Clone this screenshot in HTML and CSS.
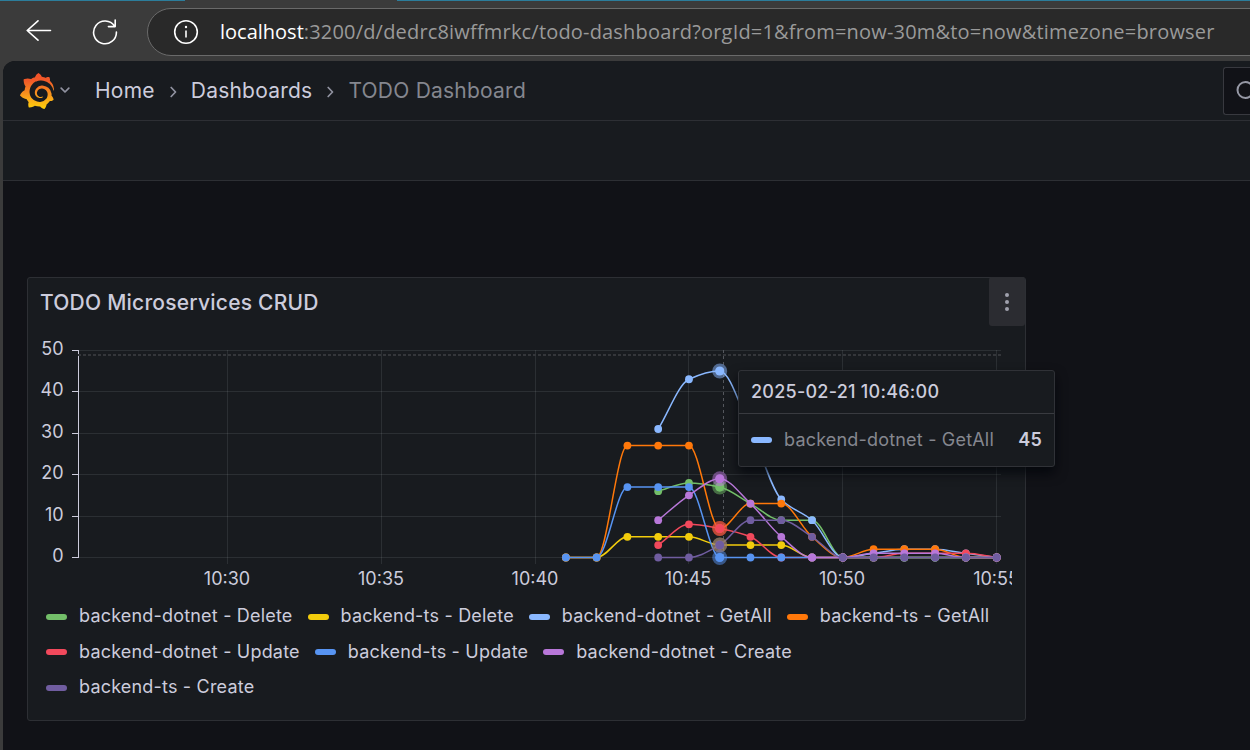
FILE: index.html
```html
<!DOCTYPE html>
<html lang="en">
<head>
<meta charset="utf-8">
<title>TODO Dashboard</title>
<link rel="stylesheet" href="styles.css">
</head>
<body>
<header class="browser">
  <svg class="nav-icon" width="26" height="22" viewBox="0 0 26 22"><path d="M24.5 10.5H1.2M12 .8 1.2 10.5 12 20.2"/></svg>
  <svg class="nav-icon reload" width="26" height="26" viewBox="0 0 26 26"><path d="M22.6 7.2A11.4 11.4 0 1 0 24.4 13M23.2 1v6.6h-6.8"/></svg>
  <div class="address">
    <svg class="info-icon" width="26" height="26" viewBox="0 0 26 26"><circle cx="13" cy="13" r="11.3"/><path d="M13 11.5v7"/><circle class="dot" cx="13" cy="8" r="1.2"/></svg>
    <span class="url"><b>localhost</b>:3200/d/dedrc8iwffmrkc/todo-dashboard?orgId=1&amp;from=now-30m&amp;to=now&amp;timezone=browser</span>
  </div>
</header>
<main class="app">
  <nav class="topbar">
    <svg class="logo" width="34" height="36" viewBox="0.95 0 22.1 24" preserveAspectRatio="none">
      <defs><linearGradient id="flame" x1="0" y1="1" x2="0" y2="0"><stop offset="0" stop-color="#fdd00a"/><stop offset=".3" stop-color="#faa61a"/><stop offset=".78" stop-color="#f05a28"/><stop offset="1" stop-color="#f0512b"/></linearGradient></defs>
      <path fill="url(#flame)" d="M23.02 10.59a8.578 8.578 0 0 0-.862-3.034 8.911 8.911 0 0 0-1.789-2.445c.337-1.342-.413-2.505-.413-2.505-1.292-.08-2.113.4-2.416.62-.052-.02-.102-.044-.154-.064-.22-.089-.446-.172-.677-.247-.231-.073-.47-.14-.711-.197a9.867 9.867 0 0 0-.875-.161C14.557.753 12.94 0 12.94 0c-1.804 1.145-2.147 2.744-2.147 2.744l-.018.093c-.098.029-.2.057-.298.088-.138.042-.275.094-.413.143-.138.055-.275.107-.41.166a8.869 8.869 0 0 0-1.557.87l-.063-.029c-2.497-.955-4.716.195-4.716.195-.203 2.658.996 4.33 1.235 4.636a11.608 11.608 0 0 0-.607 2.635C1.636 12.677.953 15.014.953 15.014c1.926 2.214 4.171 2.351 4.171 2.351.003-.002.006-.002.006-.005.285.509.615.994.986 1.446.156.19.32.371.488.548-.704 2.009.099 3.68.099 3.68 2.144.08 3.553-.937 3.849-1.173a9.784 9.784 0 0 0 3.164.501h.08l.055-.003.107-.002.103-.005.003.002c1.01 1.44 2.788 1.646 2.788 1.646 1.264-1.332 1.337-2.653 1.337-2.94v-.058c0-.02-.003-.039-.003-.06.265-.187.52-.387.758-.6a7.875 7.875 0 0 0 1.415-1.7c1.43.083 2.437-.885 2.437-.885-.236-1.49-1.085-2.216-1.264-2.354l-.018-.013-.016-.013a.217.217 0 0 1-.031-.02c.008-.092.016-.18.02-.27.011-.162.016-.323.016-.48v-.253l-.005-.098-.008-.135a1.891 1.891 0 0 0-.01-.13c-.003-.042-.008-.083-.013-.125l-.016-.124-.018-.122a6.215 6.215 0 0 0-2.032-3.73 6.015 6.015 0 0 0-3.222-1.46 6.292 6.292 0 0 0-.85-.048l-.107.002h-.063l-.044.003-.104.008a4.777 4.777 0 0 0-3.335 1.695c-.332.4-.592.84-.768 1.297a4.594 4.594 0 0 0-.312 1.817l.003.091c.005.055.007.11.013.164a3.615 3.615 0 0 0 .698 1.82 3.53 3.53 0 0 0 1.827 1.282c.33.098.66.14.971.137.039 0 .078 0 .114-.002l.063-.003c.02 0 .041-.003.062-.003.034-.002.065-.007.099-.01.007 0 .018-.003.028-.003l.031-.005.06-.008a1.18 1.18 0 0 0 .112-.02c.036-.008.072-.013.109-.024a2.634 2.634 0 0 0 .914-.415c.028-.02.056-.041.085-.065a.248.248 0 0 0 .039-.35.244.244 0 0 0-.309-.06l-.078.042c-.09.044-.184.083-.283.116a2.476 2.476 0 0 1-.475.096c-.028.003-.054.006-.083.006l-.083.002c-.026 0-.054 0-.08-.002l-.102-.006h-.012l-.024.006c-.016-.003-.031-.003-.044-.006-.031-.002-.06-.007-.091-.01a2.59 2.59 0 0 1-.724-.213 2.557 2.557 0 0 1-.667-.438 2.52 2.52 0 0 1-.805-1.475 2.306 2.306 0 0 1-.029-.444l.006-.122v-.023l.002-.031c.003-.021.003-.04.005-.06a3.163 3.163 0 0 1 1.352-2.29 3.12 3.12 0 0 1 .937-.43 2.946 2.946 0 0 1 .776-.101h.06l.07.002.045.003h.026l.07.005a4.041 4.041 0 0 1 1.635.49 3.94 3.94 0 0 1 1.602 1.662 3.77 3.77 0 0 1 .397 1.414l.005.076.003.075c.002.026.002.05.002.075 0 .024.003.052 0 .07v.065l-.002.073-.008.174a6.195 6.195 0 0 1-.08.639 5.1 5.1 0 0 1-.267.927 5.31 5.31 0 0 1-.624 1.13 5.052 5.052 0 0 1-3.237 2.014 4.82 4.82 0 0 1-.649.066l-.039.003h-.287a6.607 6.607 0 0 1-1.716-.265 6.776 6.776 0 0 1-3.4-2.274 6.75 6.75 0 0 1-.746-1.15 6.616 6.616 0 0 1-.714-2.596l-.005-.083-.002-.02v-.056l-.003-.073v-.096l-.003-.104v-.07l.003-.163c.008-.22.026-.45.054-.678a8.707 8.707 0 0 1 .28-1.355c.128-.444.286-.872.473-1.277a7.04 7.04 0 0 1 1.456-2.1 5.925 5.925 0 0 1 .953-.763c.169-.111.343-.213.524-.306.089-.05.182-.091.273-.135.047-.02.093-.042.138-.062a7.177 7.177 0 0 1 .714-.267l.145-.045c.049-.015.098-.026.148-.041.098-.029.197-.052.296-.076.049-.013.1-.02.15-.033l.15-.032.151-.028.076-.013.075-.01.153-.024c.057-.01.114-.013.171-.023l.169-.021c.036-.003.073-.008.106-.01l.073-.008.036-.003.042-.002c.057-.003.114-.008.171-.01l.086-.006h.023l.037-.003.145-.007a7.999 7.999 0 0 1 1.708.125 7.917 7.917 0 0 1 2.048.68 8.253 8.253 0 0 1 1.672 1.09l.09.077.089.078c.06.052.114.107.171.159.057.052.112.106.166.16.052.055.107.107.159.164a8.671 8.671 0 0 1 1.41 1.978c.012.026.028.052.04.078l.04.078.075.156c.023.051.05.1.07.153l.065.15a8.848 8.848 0 0 1 .45 1.34.19.19 0 0 0 .201.142.186.186 0 0 0 .172-.184c.01-.246.002-.532-.024-.856z"/>
    </svg>
    <svg class="caret" width="10" height="7" viewBox="0 0 10 7"><path d="M1.2 1.2 5 5 8.8 1.2"/></svg>
    <span class="crumb home">Home</span>
    <svg class="sep" width="7" height="12" viewBox="0 0 7 12"><path d="M1.2 1.5 5.5 6 1.2 10.5"/></svg>
    <span class="crumb dashboards">Dashboards</span>
    <svg class="sep" width="7" height="12" viewBox="0 0 7 12"><path d="M1.2 1.5 5.5 6 1.2 10.5"/></svg>
    <span class="crumb current">TODO Dashboard</span>
    <div class="search"><svg width="24" height="24" viewBox="0 0 24 24"><circle cx="10.5" cy="10" r="8"/><path d="m16 16 6 6"/></svg></div>
  </nav>
  <div class="toolbar"></div>
  <section class="canvas">
    <article class="panel">
      <div class="panel-head">
        <h2>TODO Microservices CRUD</h2>
        <button class="menu" aria-label="Menu"><i></i><i></i><i></i></button>
      </div>
      <svg class="chart" id="chart" width="984" height="268" viewBox="28 327 984 268"></svg>
      <div class="legend">
        <div class="row"><span class="item"><i class="green"></i>backend-dotnet - Delete</span><span class="item"><i class="yellow"></i>backend-ts - Delete</span><span class="item"><i class="sky"></i>backend-dotnet - GetAll</span><span class="item"><i class="orange"></i>backend-ts - GetAll</span></div>
        <div class="row"><span class="item"><i class="red"></i>backend-dotnet - Update</span><span class="item"><i class="blue"></i>backend-ts - Update</span><span class="item"><i class="violet"></i>backend-dotnet - Create</span></div>
        <div class="row"><span class="item"><i class="purple"></i>backend-ts - Create</span></div>
      </div>
      <div class="tooltip">
        <div class="time">2025-02-21 10:46:00</div>
        <div class="value"><i class="sky"></i><span>backend-dotnet - GetAll</span><b>45</b></div>
      </div>
    </article>
  </section>
</main>
<script src="chart.js"></script>
</body>
</html>
```
FILE: styles.css
```css
* { box-sizing: border-box; }
body { margin: 0; width: 1250px; height: 750px; overflow: hidden; background: #3b3b3b; font-family: Inter, sans-serif; color: #ccccdc; }
svg { display: block; flex: none; }

.browser { height: 61px; display: flex; align-items: center; padding: 2px 0 0 26px; background: linear-gradient(90deg, #2c7d9b 185px, #3b3b3b 185px, #3b3b3b 397px, #2c7d9b 397px) top / 100% 1px no-repeat #3b3b3b; }
.nav-icon { fill: none; stroke: #fff; stroke-width: 1.6; stroke-linecap: round; stroke-linejoin: round; }
.nav-icon:first-child { margin-top: -2px; }
.reload { margin-left: 40px; }
.address { width: 1130px; height: 48px; flex: none; margin-left: 29px; padding-left: 25px; display: flex; align-items: center; border: 1px solid #6a6a6a; border-radius: 24px; background: #292929; }
.info-icon { fill: none; stroke: #fff; stroke-width: 1.6; }
.info-icon .dot { fill: #fff; stroke: none; }
.url { margin-left: 21px; font: 20px "Open Sans", sans-serif; letter-spacing: .182px; color: #9a9a9a; white-space: nowrap; }
.url b { font-weight: 400; color: #fff; letter-spacing: 0; }

.app { height: 689px; margin-left: 3px; background: #111217; border-top-left-radius: 12px; overflow: hidden; }
.topbar { height: 60px; display: flex; align-items: center; background: #181b1f; border-bottom: 1px solid #2d2f34; padding-left: 17px; }
.logo { margin-top: 1px; }
.caret { margin-left: 6px; }
.caret path, .sep path { fill: none; stroke: #9092a0; stroke-width: 1.7; stroke-linecap: round; stroke-linejoin: round; }
.crumb { font-size: 21px; letter-spacing: .225px; white-space: nowrap; }
.home { margin-left: 25px; }
.sep { margin: 2px 14px 0 15px; }
.current { color: #85878f; }
.search { margin-left: auto; width: 27px; height: 48px; border: 1px solid #38393f; border-right: 0; border-radius: 3px 0 0 3px; background: #111217; padding: 12px 0 0 11px; overflow: hidden; }
.search svg { fill: none; stroke: #9698a5; stroke-width: 2; }
.toolbar { height: 60px; background: #181b1f; border-bottom: 1px solid #2d2f34; }

.canvas { padding: 96px 0 0 24px; }
.panel { position: relative; width: 999px; height: 444px; background: #181b1f; border: 1px solid #2d2f34; border-radius: 3px; }
.panel-head { height: 49px; display: flex; justify-content: space-between; }
.panel-head h2 { margin: 0; padding-left: 12px; font-size: 21px; font-weight: 500; line-height: 49px; letter-spacing: .225px; }
.menu { width: 36px; height: 49px; margin-top: -1px; padding: 0; border: 0; border-radius: 3px; background: #2b2c31; display: flex; flex-direction: column; align-items: center; justify-content: center; gap: 3px; }
.menu i { width: 4px; height: 4px; border-radius: 50%; background: #a0a1ad; }
.chart { overflow: hidden; }
.grid { stroke: rgba(240,250,255,.09); stroke-width: 1; shape-rendering: crispEdges; }
.axis { stroke: #ccccdc; stroke-width: 1; shape-rendering: crispEdges; }
.threshold { stroke: #34363a; stroke-width: 2; stroke-dasharray: 3 2; }
.cursor { stroke: #54575d; stroke-width: 1; stroke-dasharray: 3 3; }
.label { font-size: 18px; fill: #ccccdc; }
.line { fill: none; stroke-width: 1.5; }

.legend { padding: 3px 0 0 18px; }
.row { height: 35.5px; display: flex; align-items: center; gap: 15px; }
.item { display: flex; align-items: center; font-size: 18px; letter-spacing: .19px; white-space: nowrap; }
.item i, .value i { width: 21px; height: 6px; border-radius: 3px; flex: none; margin-right: 12px; }
.item i { margin-top: 2px; }
.green { background: #73bf69; }
.yellow { background: #f2cc0c; }
.sky { background: #8ab8ff; }
.orange { background: #ff780a; }
.red { background: #f2495c; }
.blue { background: #5794f2; }
.violet { background: #b877d9; }
.purple { background: #705da0; }

.tooltip { position: absolute; left: 710px; top: 92px; width: 317px; height: 97px; background: #181b1f; border: 1px solid #303237; border-radius: 3px; box-shadow: 0 6px 12px rgba(1,4,9,.75); font-size: 18px; letter-spacing: .19px; white-space: nowrap; }
.time { height: 43px; line-height: 42px; padding-left: 12px; font-weight: 500; letter-spacing: .25px; border-bottom: 1px solid #393b40; }
.value { height: 52px; display: flex; align-items: center; padding: 0 12px; }
.value span { color: #85878f; margin-top: -1px; }
.value b { margin: -1px 0 0 auto; font-weight: 600; }
```
FILE: chart.js
```js
const svg = document.getElementById('chart');
const xPos = minute => 535.1 + (minute - 40) * 30.77;
const yPos = value => 557.5 - value * 4.145;

function add(name, attrs, text) {
  const node = document.createElementNS('http://www.w3.org/2000/svg', name);
  for (const key in attrs) node.setAttribute(key, attrs[key]);
  if (text !== undefined) node.textContent = text;
  svg.appendChild(node);
}

// Monotone cubic interpolation keeps each curve inside its data range.
function curve(points) {
  const n = points.length;
  const slopes = [];
  for (let i = 0; i < n - 1; i++) slopes.push((points[i + 1][1] - points[i][1]) / (points[i + 1][0] - points[i][0]));
  const tangents = [slopes[0]];
  for (let i = 1; i < n - 1; i++) {
    const a = slopes[i - 1], b = slopes[i];
    tangents.push(a * b <= 0 ? 0 : 2 * a * b / (a + b));
  }
  tangents.push(slopes[n - 2]);
  let d = `M${points[0]}`;
  for (let i = 0; i < n - 1; i++) {
    const [x0, y0] = points[i], [x1, y1] = points[i + 1], h = (x1 - x0) / 3;
    d += `C${x0 + h} ${y0 + tangents[i] * h} ${x1 - h} ${y1 - tangents[i + 1] * h} ${x1} ${y1}`;
  }
  return d;
}

const series = [
  { color: '#73bf69', start: 44, values: [16, 18, 17, 13, 9, 9, 0, 0, 0, 0, 0, 0] },
  { color: '#f2cc0c', start: 41, values: [0, 0, 5, 5, 5, 3, 3, 3, 0, 0, 0, 0, 0, 0, 0] },
  { color: '#8ab8ff', start: 44, values: [31, 43, 45, 31, 14, 9, 0, 1, 2, 2, 1, 0] },
  { color: '#ff780a', start: 41, values: [0, 0, 27, 27, 27, 7, 13, 13, 5, 0, 2, 2, 2, 0, 0] },
  { color: '#f2495c', start: 44, values: [3, 8, 7, 5, 0, 0, 0, 0, 1, 1, 1, 0] },
  { color: '#5794f2', start: 41, values: [0, 0, 17, 17, 17, 0, 0, 0, 0, 0, 0, 0, 0, 0, 0] },
  { color: '#b877d9', start: 44, values: [9, 15, 19, 13, 5, 0, 0, 1, 1, 1, 0, 0] },
  { color: '#705da0', start: 44, values: [0, 0, 3, 9, 9, 5, 0, 0, 0, 0, 0, 0] }
];

for (let v = 0; v <= 50; v += 10) {
  const y = Math.round(yPos(v) - 0.5) + 0.5;
  add('line', { class: 'grid', x1: 79, x2: 1001, y1: y, y2: y });
  add('line', { class: 'axis', x1: 72, x2: 79, y1: y, y2: y });
  add('text', { class: 'label', x: 63.6, y: y + 4.5, 'text-anchor': 'end' }, v);
}
for (let m = 30; m <= 55; m += 5) {
  const x = Math.round(xPos(m) - 0.5) + 0.5;
  add('line', { class: 'grid', x1: x, x2: x, y1: 350, y2: 564 });
  add('text', { class: 'label', x: x - 0.5, y: 585, 'text-anchor': 'middle' }, '10:' + m);
}
add('line', { class: 'axis', x1: 78.5, x2: 78.5, y1: 350, y2: 558 });
add('line', { class: 'threshold', x1: 78, x2: 1001, y1: 355, y2: 355 });

for (const s of series) {
  const points = s.values.map((v, i) => [xPos(s.start + i), yPos(v)]);
  add('path', { class: 'line', d: curve(points), stroke: s.color });
  for (const [cx, cy] of points) add('circle', { cx, cy, r: 3.9, fill: s.color });
}
add('line', { class: 'cursor', x1: 723.5, x2: 723.5, y1: 350, y2: 558 });
for (const s of series) {
  const cx = xPos(46), cy = yPos(s.values[46 - s.start]);
  add('circle', { cx, cy, r: 7.5, fill: s.color, opacity: 0.5 });
  add('circle', { cx, cy, r: 4.6, fill: s.color });
}
```
